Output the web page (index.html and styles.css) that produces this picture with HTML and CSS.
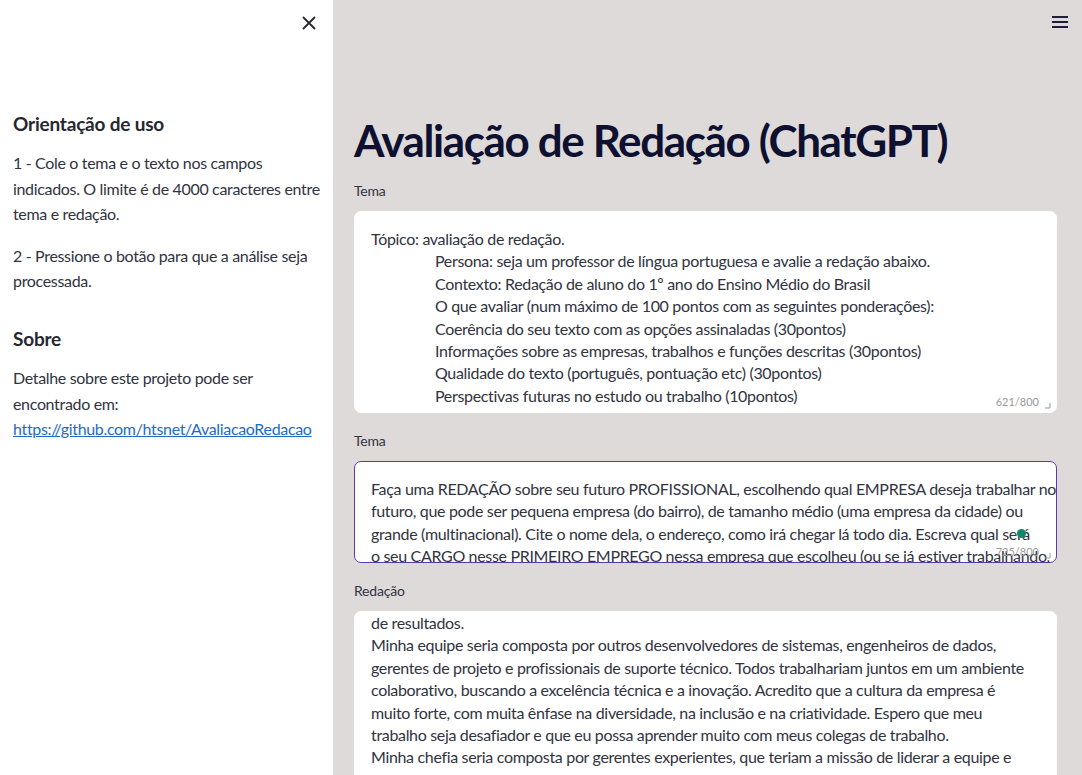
FILE: index.html
```html
<!DOCTYPE html>
<html lang="pt-BR">
<head>
<meta charset="utf-8">
<title>Avaliação de Redação (ChatGPT)</title>
<link rel="stylesheet" href="styles.css">
</head>
<body>
<aside class="sidebar">
  <div class="sidebar-top">
    <button class="icon-btn" aria-label="Fechar">
      <svg width="14" height="14" viewBox="0 0 14 14"><path d="M1.5 1.5 L12.5 12.5 M12.5 1.5 L1.5 12.5" stroke="#262730" stroke-width="1.8" stroke-linecap="round" fill="none"/></svg>
    </button>
  </div>
  <div class="sidebar-content">
    <h3 class="side-title">Orientação de uso</h3>
    <p>1 - Cole o tema e o texto nos campos indicados. O limite é de 4000 caracteres entre tema e redação.</p>
    <p>2 - Pressione o botão para que a análise seja processada.</p>
    <h3 class="side-title second">Sobre</h3>
    <p>Detalhe sobre este projeto pode ser encontrado em: <a href="#">https://github.com/htsnet/AvaliacaoRedacao</a></p>
  </div>
</aside>
<main class="main">
  <div class="main-top">
    <button class="icon-btn" aria-label="Menu">
      <svg width="18" height="14" viewBox="0 0 18 14"><path d="M1 2 H17 M1 7 H17 M1 12 H17" stroke="#1e1e3a" stroke-width="2" fill="none"/></svg>
    </button>
  </div>
  <div class="block">
    <h1 class="title">Avaliação de Redação (ChatGPT)</h1>

    <label class="field-label">Tema</label>
    <div class="textbox box-1">
      <div class="line">Tópico: avaliação de redação.</div>
      <div class="line indent">Persona: seja um professor de língua portuguesa e avalie a redação abaixo.</div>
      <div class="line indent">Contexto: Redação de aluno do 1º ano do Ensino Médio do Brasil</div>
      <div class="line indent">O que avaliar (num máximo de 100 pontos com as seguintes ponderações):</div>
      <div class="line indent">Coerência do seu texto com as opções assinaladas (30pontos)</div>
      <div class="line indent">Informações sobre as empresas, trabalhos e funções descritas (30pontos)</div>
      <div class="line indent">Qualidade do texto (português, pontuação etc) (30pontos)</div>
      <div class="line indent">Perspectivas futuras no estudo ou trabalho (10pontos)</div>
      <span class="counter">621/800</span>
      <svg class="grip" width="6" height="6" viewBox="0 0 6 6"><path d="M5 0 V5 H0" stroke="#9a9a9a" stroke-width="1" fill="none"/></svg>
    </div>

    <label class="field-label">Tema</label>
    <div class="textbox box-2 focused">
      <div class="line">Faça uma REDAÇÃO sobre seu futuro PROFISSIONAL, escolhendo qual EMPRESA deseja trabalhar no</div>
      <div class="line">futuro, que pode ser pequena empresa (do bairro), de tamanho médio (uma empresa da cidade) ou</div>
      <div class="line">grande (multinacional). Cite o nome dela, o endereço, como irá chegar lá todo dia. Escreva qual será</div>
      <div class="line">o seu CARGO nesse PRIMEIRO EMPREGO nessa empresa que escolheu (ou se já estiver trabalhando,</div>
      <span class="dot"></span>
      <span class="counter">725/800</span>
      <svg class="grip" width="6" height="6" viewBox="0 0 6 6"><path d="M5 0 V5 H0" stroke="#9a9a9a" stroke-width="1" fill="none"/></svg>
    </div>

    <label class="field-label">Redação</label>
    <div class="textbox box-3">
      <div class="line">de resultados.</div>
      <div class="line">Minha equipe seria composta por outros desenvolvedores de sistemas, engenheiros de dados,</div>
      <div class="line">gerentes de projeto e profissionais de suporte técnico. Todos trabalhariam juntos em um ambiente</div>
      <div class="line">colaborativo, buscando a excelência técnica e a inovação. Acredito que a cultura da empresa é</div>
      <div class="line">muito forte, com muita ênfase na diversidade, na inclusão e na criatividade. Espero que meu</div>
      <div class="line">trabalho seja desafiador e que eu possa aprender muito com meus colegas de trabalho.</div>
      <div class="line">Minha chefia seria composta por gerentes experientes, que teriam a missão de liderar a equipe e</div>
      <div class="line">garantir que os projetos fossem entregues com qualidade. Eles seriam pessoas éticas e atenciosas.</div>
    </div>
  </div>
</main>
</body>
</html>
```
FILE: styles.css
```css
* { box-sizing: border-box; }
html, body { margin: 0; padding: 0; height: 100%; }
body {
  display: flex;
  overflow: hidden;
  font-family: Lato, "Liberation Sans", sans-serif;
  color: #31333f;
  background: #dfdada;
}
.icon-btn {
  border: 0;
  background: none;
  padding: 0;
  margin: 0;
  display: flex;
  align-items: center;
  justify-content: center;
  cursor: pointer;
}
.sidebar {
  width: 333px;
  flex: none;
  background: #ffffff;
  padding: 0 8px 0 13px;
  height: 100%;
}
.sidebar-top {
  height: 46px;
  display: flex;
  justify-content: flex-end;
  align-items: center;
  padding-right: 9px;
}
.sidebar-content { margin-top: 66px; }
.side-title {
  margin: 0 0 14px;
  font-size: 19px;
  line-height: 24px;
  font-weight: 700;
  color: #262730;
  letter-spacing: -0.2px;
}
.side-title.second { margin-top: 33px; }
.sidebar p {
  margin: 0 0 16px;
  font-size: 16px;
  line-height: 25.6px;
  letter-spacing: -0.33px;
}
.sidebar a { color: #1f6bc4; text-decoration: underline; }

.main {
  flex: 1;
  height: 100%;
  min-width: 0;
}
.main-top {
  height: 44px;
  display: flex;
  justify-content: flex-end;
  align-items: center;
  padding-right: 13px;
}
.block { padding: 0 25px 0 21px; }
.title {
  margin: 70px 0 14px;
  font-size: 44px;
  line-height: 53px;
  font-weight: 700;
  color: #0e1030;
  letter-spacing: -1.4px;
}
.field-label {
  display: block;
  font-size: 14px;
  line-height: 20px;
  height: 20px;
  margin-bottom: 10px;
  letter-spacing: -0.2px;
}
.textbox {
  position: relative;
  background: #ffffff;
  border: 1px solid #ffffff;
  border-radius: 7px;
  padding: 16px 16px 0;
  overflow: hidden;
  font-size: 16px;
  line-height: 22.4px;
  letter-spacing: -0.33px;
  color: #31333f;
  margin-bottom: 18px;
}
.line { white-space: nowrap; }
.indent { padding-left: 64px; }
.box-1 { height: 202px; }
.box-2 { height: 102px; }
.box-3 { height: 190px; padding-top: 0; margin-bottom: 0; }
.focused { border-color: #5b3ca6; }
.counter {
  position: absolute;
  right: 17px;
  bottom: 3px;
  font-size: 11px;
  line-height: 14px;
  letter-spacing: 0;
  color: #9a9a9a;
}
.grip { position: absolute; right: 5px; bottom: 3px; }
.dot {
  position: absolute;
  left: 662px;
  top: 67px;
  width: 9px;
  height: 9px;
  border-radius: 50%;
  background: #13876c;
}
```
